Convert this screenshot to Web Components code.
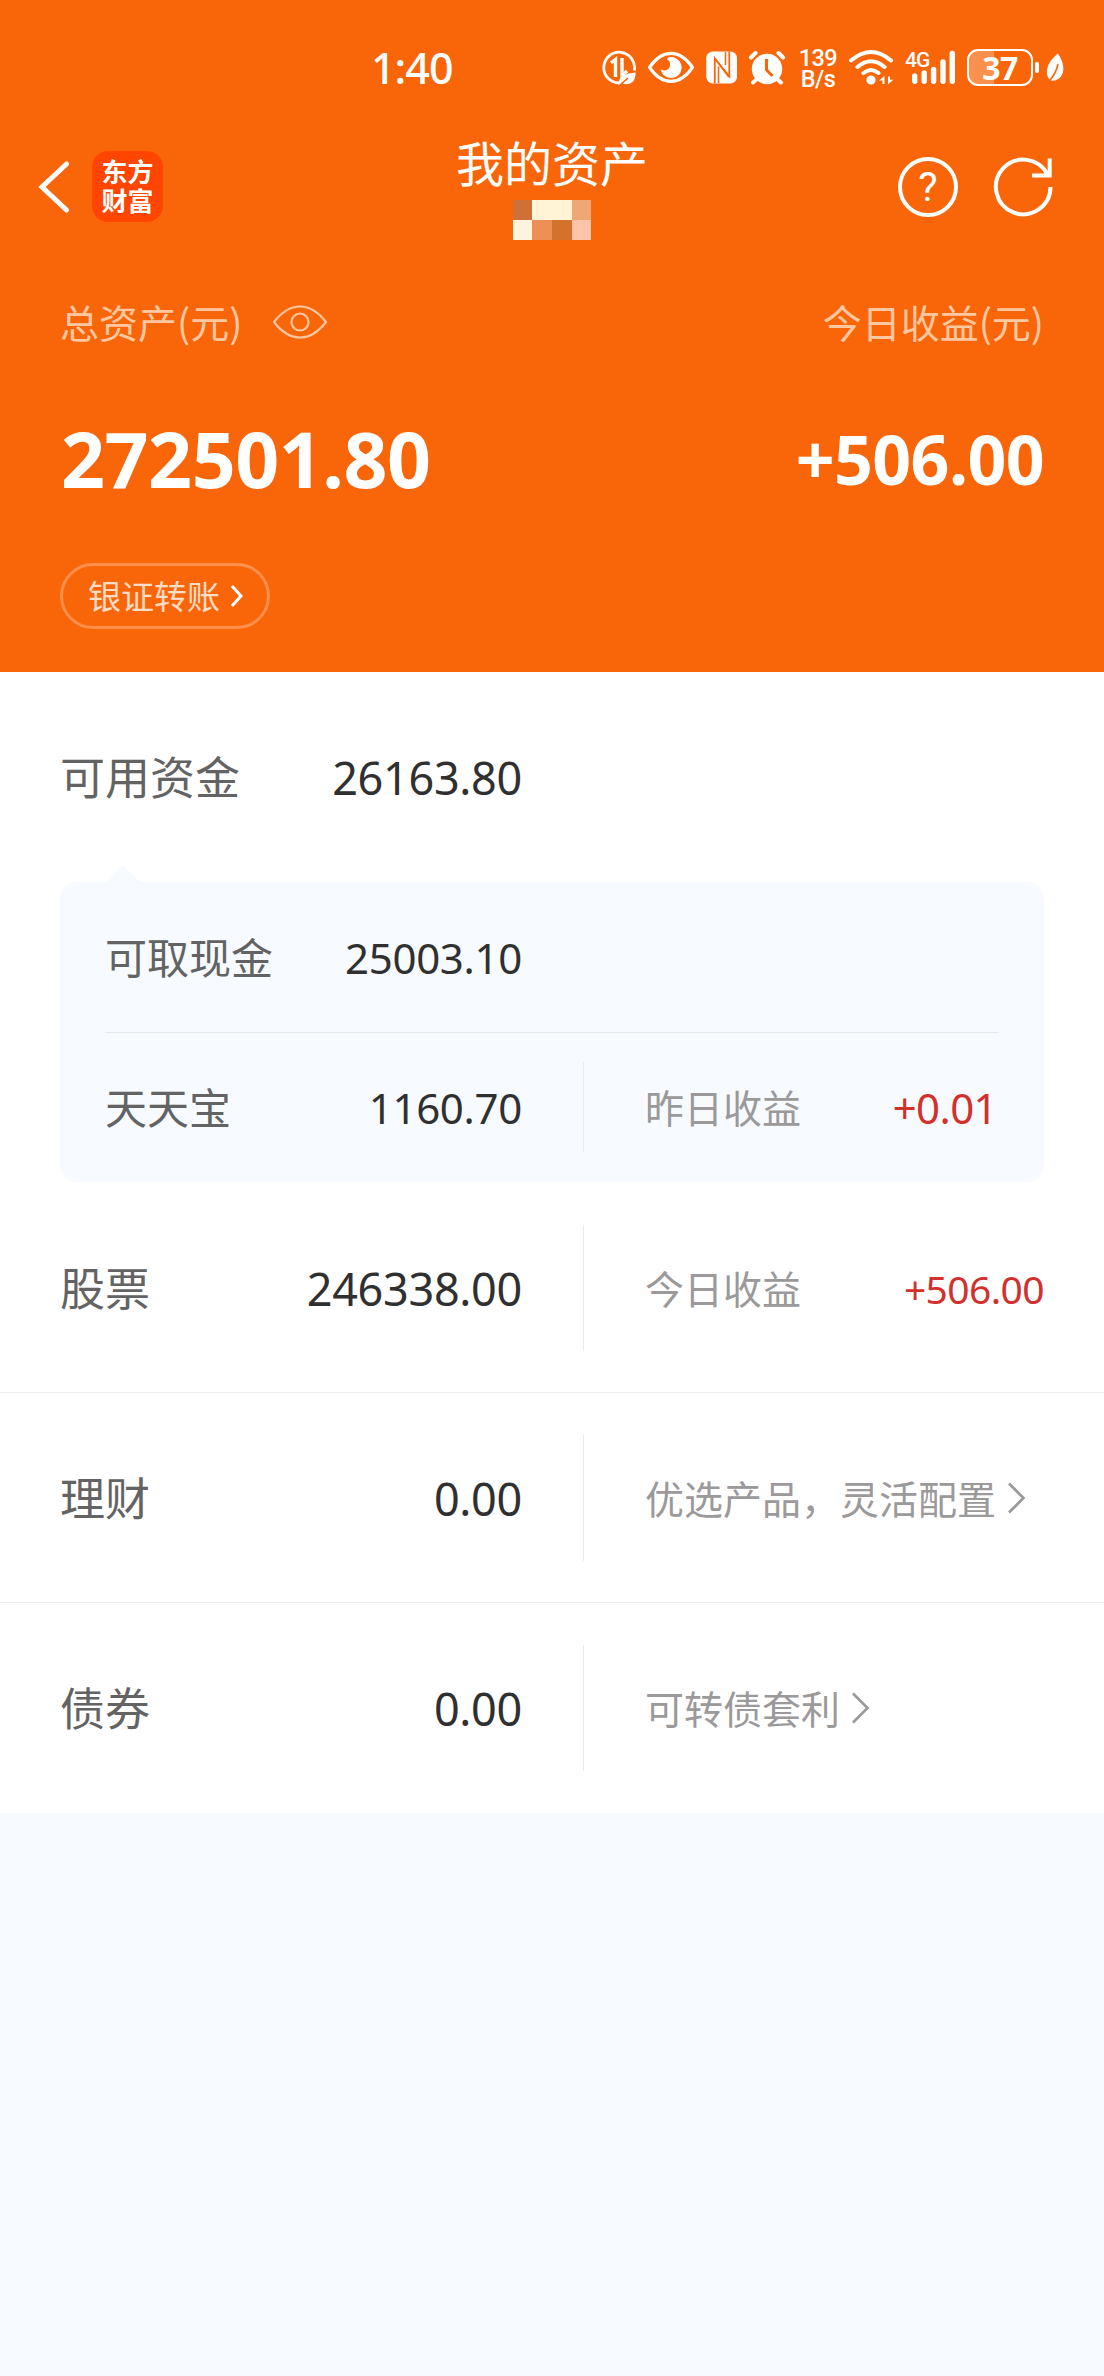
<!DOCTYPE html>
<html lang="zh-CN">
<head>
<meta charset="utf-8">
<title>我的资产</title>
<style>
  html, body { margin: 0; padding: 0; }
  body {
    min-height: 2376px;
    background: #f7faff;
    font-family: "Noto Sans CJK SC", "Noto Sans", sans-serif;
    --num: "Noto Sans", "Noto Sans CJK SC", sans-serif;
    --brand: #f9660a;
  }
</style>
</head>
<body>
<asset-page></asset-page>
<script>
const define = (name, html) => {
  const tpl = document.createElement('template');
  tpl.innerHTML = html;
  customElements.define(name, class extends HTMLElement {
    constructor() {
      super();
      this.attachShadow({ mode: 'open' }).appendChild(tpl.content.cloneNode(true));
    }
  });
};

define('status-bar', `
<style>
  :host { display: flex; height: 134px; box-sizing: border-box; padding: 0 40px 0 371px; align-items: center; color: #fff; justify-content: space-between; }
  .time { font: 500 43px/60px var(--num); letter-spacing: -1px; padding-top: 2px; }
  .icons { display: flex; align-items: center; height: 40px; }
  svg { display: block; flex: none; }
  .speed { display: flex; flex-direction: column; align-items: center; width: 38px; margin: 3px 12px 0 13px; font: 500 23.5px/21px Roboto, sans-serif; letter-spacing: -.6px; }
  .bars { display: flex; width: 51px; height: 40px; margin-left: 11px; position: relative; }
  .bars span { position: absolute; left: 0; top: 2px; font: 500 21px/22px Roboto, sans-serif; letter-spacing: -1px; }
  .batt { display: flex; align-items: center; justify-content: center; box-sizing: border-box; width: 66px; height: 37px; padding-top: 1px; border: 2.5px solid #fff; border-radius: 11px; margin-left: 11px;
    background: linear-gradient(90deg, rgba(255,255,255,.28) 41%, transparent 41%); font: 700 32px/32px var(--num); letter-spacing: -.5px; }
  .tip { width: 4px; height: 11px; border-radius: 2px; background: #fff; margin: 0 7px 0 2px; }
</style>
<div class="time">1:40</div>
<div class="icons">
  <svg width="36" height="40" viewBox="601 47 36 40" fill="none" stroke="#fff" stroke-width="2.8">
    <path d="M634.3 70.5A15.4 15.4 0 1 0 619.5 83"/>
    <path d="M611 63l4.500-3.500V77" stroke-width="3.400"/><path d="M622 58v17.500l5-4.500" stroke-width="3.400"/>
    <path d="M618.500 85C618 76 626 73.500 635.500 72.500 636 81 631 86 622.500 83.500Z" fill="#fff" stroke="none"/>
    <path d="M619 86l9-8" stroke="#f9660a" stroke-width="1.6"/>
  </svg>
  <svg style="margin-left:10px" width="48" height="40" viewBox="647 47 48 40">
    <path d="M649.500 67.300Q659 53.300 671 53.300T692.500 67.300Q683 81.300 671 81.300T649.500 67.300Z" fill="none" stroke="#fff" stroke-width="3.200" stroke-linejoin="round"/>
    <path d="M668 57.500A10.500 10.500 0 1 1 660.700 69C664 72 669.500 70 670 65.500 670.500 62 669 60 667 59.500Z" fill="#fff"/>
  </svg>
  <svg style="margin-left:11px" width="32" height="40" viewBox="706 47 32 40">
    <rect x="706.300" y="51.500" width="30.700" height="32" rx="6.500" fill="#fff"/>
    <path d="M714.800 83.500V58.500L729 77M729.300 51.500v25L715 58.500M714.800 58.500" fill="none" stroke="#f9660a" stroke-width="1.800"/>
    <path d="M718.500 66.500V83M725.500 52v13" fill="none" stroke="#f9660a" stroke-width="1.500"/>
  </svg>
  <svg style="margin-left:10px" width="38" height="40" viewBox="748 47 38 40">
    <circle cx="767" cy="69" r="15.200" fill="#fff"/>
    <path d="M751 57.500l4.500-4.500M783 57.500l-4.500-4.500" stroke="#fff" stroke-width="4" stroke-linecap="round"/>
    <path d="M757 79l-4 3.500M777 79l4 3.500" stroke="#fff" stroke-width="4" stroke-linecap="round"/>
    <path d="M766.500 59v11l6 6" fill="none" stroke="#f9660a" stroke-width="3"/>
  </svg>
  <div class="speed"><span>139</span><span>B/s</span></div>
  <svg width="45" height="40" viewBox="849 47 45 40" fill="none" stroke="#fff" stroke-width="4" stroke-linecap="round">
    <path d="M851 60.500Q871 43.500 891 60.500M857.500 67Q871 55.500 884.500 67M863.500 73Q871 67 878.500 73"/>
    <circle cx="871" cy="80" r="4.600" fill="#fff" stroke="none"/>
    <path d="M879 80.500l5.500-4.500v8h-2v-3.500ZM893.300 79.800l-5.300 4.700v-8h2v3.300Z" fill="#fff" stroke="none"/>
  </svg>
  <div class="bars">
    <svg width="51" height="40" viewBox="905 47 51 40" stroke="#fff" stroke-width="5.400" stroke-linecap="round"><path d="M914.700 76v5.300M924.200 73v8.300M933.600 69.500v11.800M943 62v19.300M952.300 53.500v27.800"/></svg>
    <span>4G</span>
  </div>
  <div class="batt">37</div><div class="tip"></div>
  <svg width="18" height="40" viewBox="1046 47 18 40"><path d="M1058 53.500C1063 61 1065.500 70 1061 76.500 1058 80.500 1052 82 1049.500 79.500 1044 73 1047 62 1058 53.500Z" fill="#fff"/><path d="M1058 64Q1056 74 1048.500 82" fill="none" stroke="#f9660a" stroke-width="1.600"/></svg>
</div>`);

define('pixel-mask', `
<style>
  :host { display: grid; grid-template-columns: 19px 20px 20px 19px; grid-template-rows: 20px 20px; width: 78px; height: 40px; }
</style>
<i style="background:#ce7038"></i><i style="background:#fff5d6"></i><i style="background:#fff5d6"></i><i style="background:#efa775"></i>
<i style="background:#fff5de"></i><i style="background:#ee9056"></i><i style="background:#d2722b"></i><i style="background:#ffc4a8"></i>`);

define('nav-bar', `
<style>
  :host { display: grid; grid-template-columns: 1fr auto 1fr; height: 118px; box-sizing: border-box; padding: 0 50px 0 38px; color: #fff; }
  .left { display: flex; align-items: center; height: 105px; }
  .left svg { margin-right: 20px; }
  .logo { width: 71px; height: 71px; box-sizing: border-box; padding-bottom: 3px; border-radius: 16px; background: #ff4500; display: flex; flex-direction: column; align-items: center; justify-content: center; font-weight: 700; font-size: 26px; line-height: 29px; }
  .mid { display: flex; flex-direction: column; align-items: center; padding-top: 1px; margin-left: 12px; }
  .mid b { font: 400 48px/52px "Noto Sans CJK SC", sans-serif; margin-bottom: 13px; }
  .right { display: flex; align-items: center; justify-content: flex-end; height: 105px; gap: 34px; }
  .help { width: 60px; height: 60px; box-sizing: border-box; border: 4px solid #fff; border-radius: 50%; display: flex; align-items: center; justify-content: center; font: 400 41px/52px Roboto, sans-serif; }
</style>
<div class="left">
  <svg width="34" height="60" viewBox="38 157 34 60" fill="none" stroke="#fff" stroke-width="5" stroke-linecap="round"><path d="M66.500 164L42 187l24.500 23"/></svg>
  <div class="logo"><span>东方</span><span>财富</span></div>
</div>
<div class="mid"><b>我的资产</b><pixel-mask></pixel-mask></div>
<div class="right">
  <div class="help">?</div>
  <svg width="62" height="62" viewBox="992 155 62 62" fill="none" stroke="#fff" stroke-width="4"><path d="M1050.500 186A27.300 27.300 0 1 1 1047.500 173.500M1032 174.500h19.700M1049.700 157.500v19"/></svg>
</div>`);

define('asset-hero', `
<style>
  :host { display: block; height: 672px; background: var(--brand); }
  .line { display: flex; justify-content: space-between; align-items: center; padding: 0 60px; }
  .caps { height: 40px; margin-top: 49px; font-size: 39px; line-height: 40px; color: #ffc8a1; }
  .caps span { display: flex; align-items: center; }
  .caps svg { margin: 2px 0 0 30px; }
  .nums { height: 90px; margin-top: 73px; padding: 0 60px 0 61px; color: #fff; font: 700 77px/90px var(--num); letter-spacing: -.5px; }
  .nums .r { font-size: 68px; letter-spacing: -.6px; }
  .pill { display: flex; align-items: center; box-sizing: border-box; width: 210px; height: 66px; margin: 59px 0 0 60px; padding-left: 25px; border: 3px solid #ff8f49; border-radius: 33px; font-size: 33px; line-height: 40px; color: #ffdcc4; }
  .pill span { margin-top: -3px; }
  .pill svg { margin-left: 10px; }
</style>
<status-bar></status-bar>
<nav-bar></nav-bar>
<div class="line caps"><span>总资产(元)<svg width="56" height="38" viewBox="271 304 56 38" fill="none" stroke="#ffc8a1" stroke-width="2.200"><path d="M273 323Q285 307.500 299 307.500T325 323Q313 338.500 299 338.500T273 323Z" stroke-linejoin="round"/><circle cx="299" cy="323" r="8.500"/></svg></span><span>今日收益(元)</span></div>
<div class="line nums"><span>272501.80</span><span class="r">+506.00</span></div>
<div class="pill"><span>银证转账</span><svg width="14" height="24" viewBox="0 0 14 24" fill="none" stroke="#fff" stroke-width="3"><path d="M2 2l9 10-9 10"/></svg></div>`);

define('asset-row', `
<style>
  :host { display: flex; align-items: center; height: 210px; box-sizing: border-box; padding: 0 60px; --fs: 45px; --bar: 126px; --pad: 60px; }
  :host([compact]) { height: 150px; padding: 0 45px; --fs: 42px; --bar: 90px; --pad: 105px; }
  .main { display: flex; justify-content: space-between; align-items: center; width: calc(522px - var(--pad)); flex: none; font-size: var(--fs); line-height: 60px; color: #636363; }
  .label { margin-top: -2px; }
  .value { font-family: var(--num); color: #303030; letter-spacing: -.3px; margin-top: 2px; }
  .side { display: flex; flex: 1; align-items: center; justify-content: space-between; height: var(--bar); margin-left: 61px; padding-left: 61px; border-left: 1px solid #ececee; font-size: 39px; line-height: 58px; color: #9b9999; }
  .side ::slotted(span) { margin-top: -2px; }
  :host([plain]) .side { display: none; }
</style>
<div class="main"><span class="label"><slot name="label"></slot></span><span class="value"><slot name="value"></slot></span></div>
<div class="side"><slot></slot></div>`);

define('gain-value', `
<style>:host { display: block; font-family: var(--num); color: #d2302c; letter-spacing: -.6px; padding-top: 2px; }</style><slot></slot>`);

define('more-link', `
<style>:host { display: flex; align-items: center; } span { margin-top: -2px; } svg { margin-left: 12px; }</style>
<span><slot></slot></span><svg width="18" height="32" viewBox="0 0 18 32" fill="none" stroke="#9b9999" stroke-width="2.700"><path d="M1 1.500L15.500 16 1 30.500"/></svg>`);

define('cash-card', `
<style>
  :host { display: block; position: relative; height: 300px; margin: 0 60px; background: #f7faff; border-radius: 16px; }
  :host::before { content: ""; position: absolute; left: 45px; top: -17px; border: 18px solid transparent; border-top: 0; border-bottom-color: #f7faff; }
  hr { height: 1px; margin: 0 45px -1px; border: 0; background: #e5e6ea; }
</style>
<slot name="top"></slot><hr><slot name="bottom"></slot>`);

define('asset-page', `
<style>
  :host { display: block; width: 1104px; }
  .list { background: #fff; height: 1141px; }
  .sep { border-bottom: 1px solid #eee; height: 210px; }
  .first { margin-top: 1px; }
  .small { font-size: 42px; padding-right: 2px; }
</style>
<asset-hero></asset-hero>
<div class="list">
  <asset-row plain><span slot="label">可用资金</span><span slot="value">26163.80</span></asset-row>
  <cash-card>
    <asset-row slot="top" compact plain><span slot="label">可取现金</span><span slot="value">25003.10</span></asset-row>
    <asset-row slot="bottom" compact><span slot="label">天天宝</span><span slot="value">1160.70</span><span>昨日收益</span><gain-value class="small">+0.01</gain-value></asset-row>
  </cash-card>
  <asset-row class="sep first"><span slot="label">股票</span><span slot="value">246338.00</span><span>今日收益</span><gain-value>+506.00</gain-value></asset-row>
  <asset-row class="sep"><span slot="label">理财</span><span slot="value">0.00</span><more-link>优选产品，灵活配置</more-link></asset-row>
  <asset-row><span slot="label">债券</span><span slot="value">0.00</span><more-link>可转债套利</more-link></asset-row>
</div>`);
</script>
</body>
</html>
